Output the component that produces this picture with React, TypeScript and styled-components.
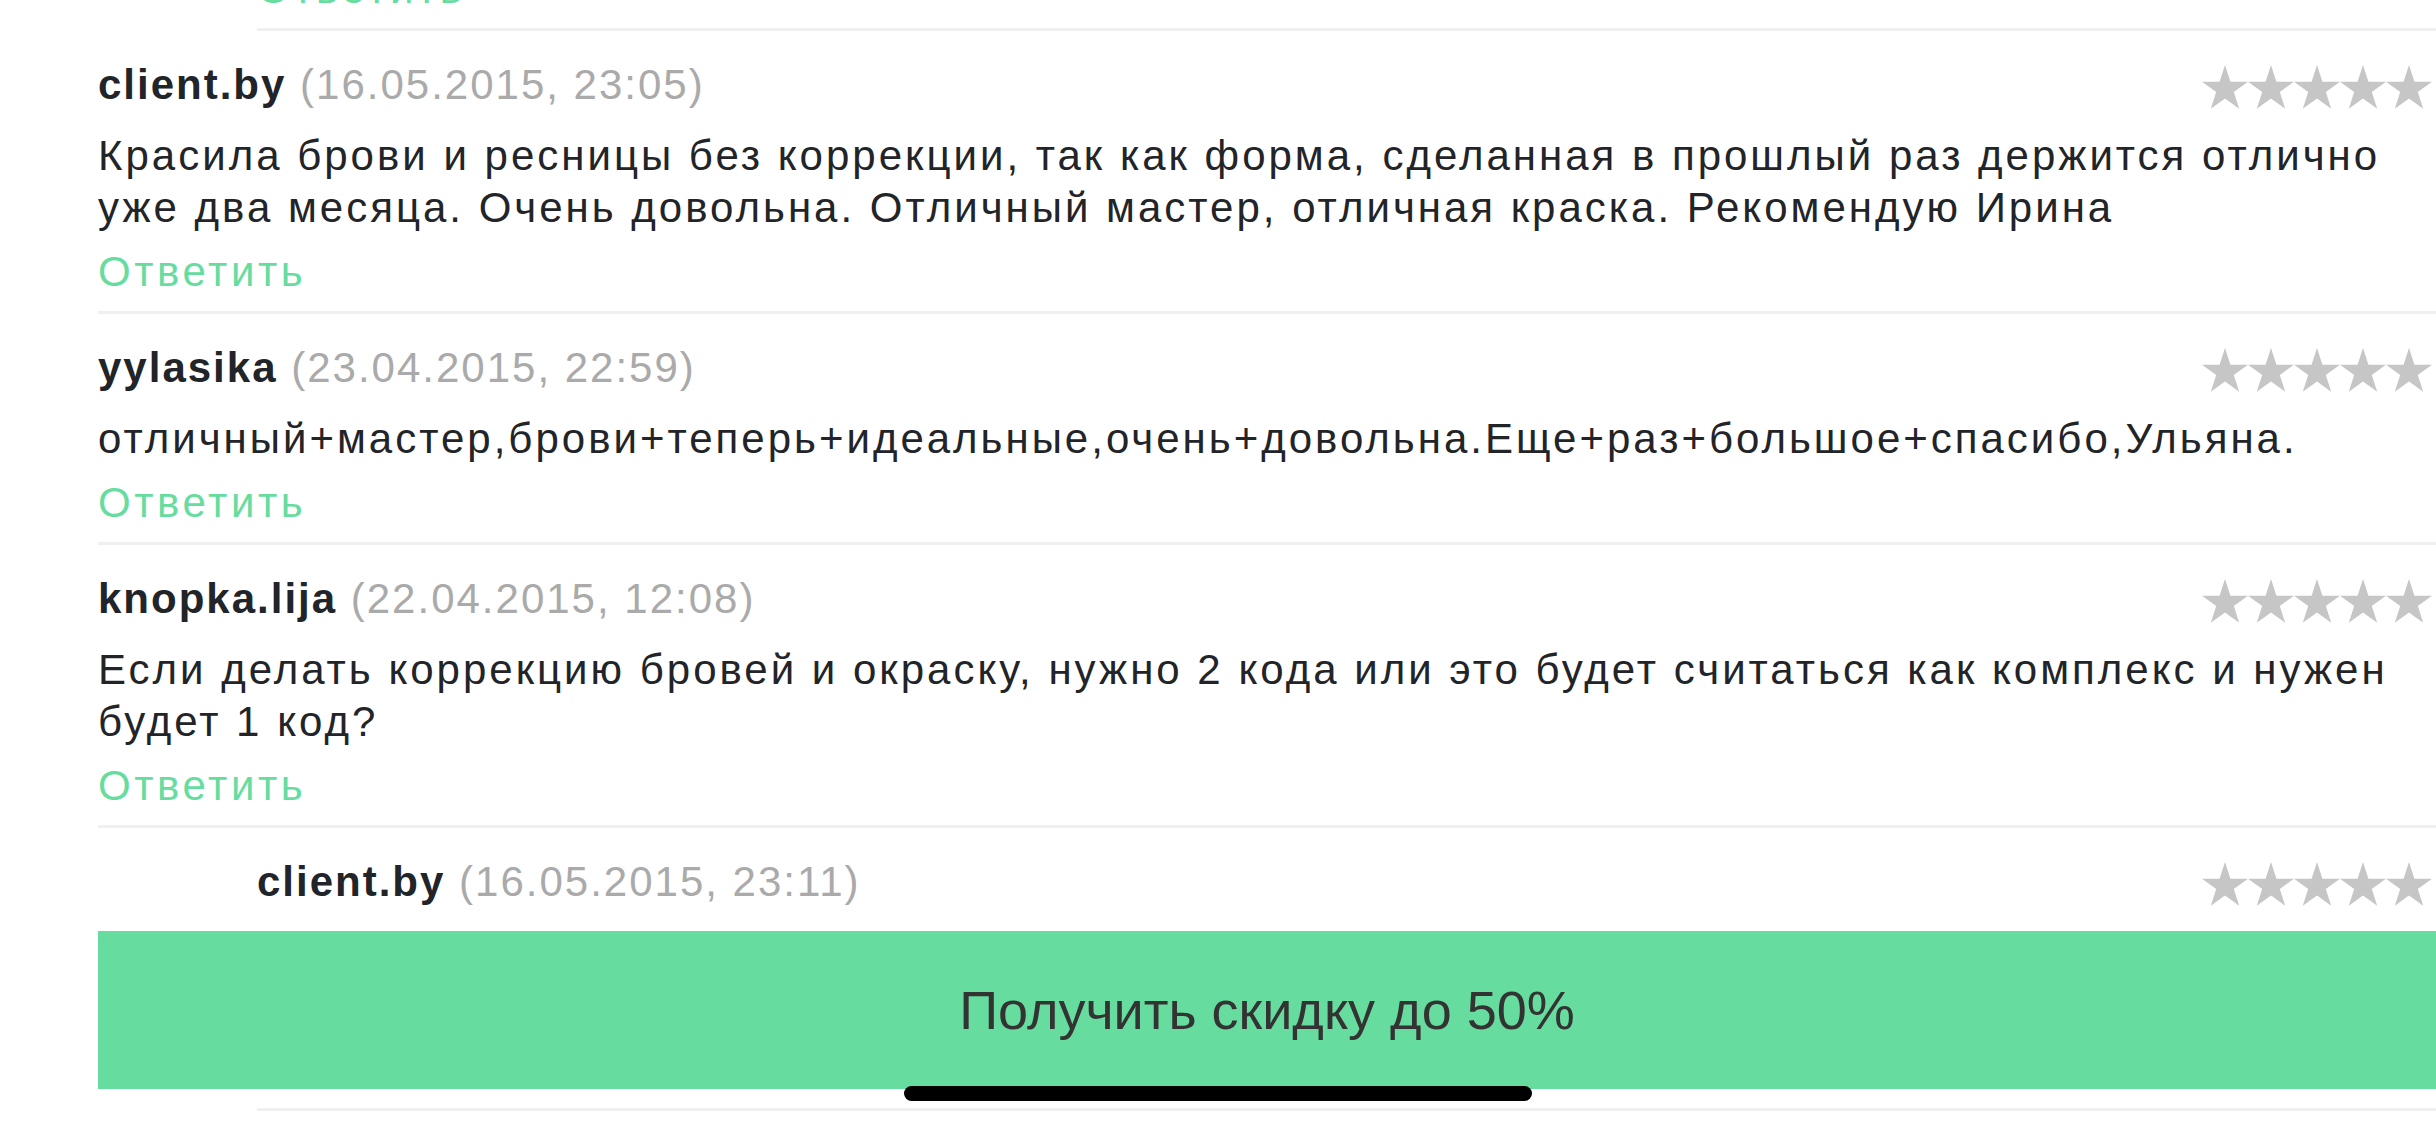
import styled, { createGlobalStyle } from 'styled-components';

const GlobalStyle = createGlobalStyle`
  html, body {
    margin: 0;
    padding: 0;
    background: #fff;
  }
  body {
    font-family: "Liberation Sans", Helvetica, Arial, sans-serif;
    color: #222428;
  }
`;

const Screen = styled.div`
  position: relative;
  width: 2436px;
  height: 1125px;
  overflow: hidden;
  background: #fff;
`;

const Feed = styled.div`
  display: flex;
  flex-direction: column;
  margin-top: -200px;
  padding-left: 98px;
`;

const Item = styled.div<{ $nested?: boolean }>`
  display: flex;
  flex-direction: column;
  margin-left: ${(p) => (p.$nested ? '159px' : '0')};
  padding: 28px 0 13px;
  border-bottom: 3px solid #f0f0f0;
`;

const Header = styled.div`
  display: flex;
  justify-content: space-between;
  align-items: flex-start;
  margin-bottom: 19px;
`;

const Author = styled.div`
  font-size: 42px;
  line-height: 52px;
  letter-spacing: 2px;
  white-space: nowrap;
`;

const Name = styled.span`
  font-weight: 700;
  color: #212428;
`;

const Date = styled.span`
  color: #aaaaaa;
`;

const Stars = styled.div`
  display: flex;
  margin-top: 6px;
  margin-right: 4px;
`;

const Text = styled.div`
  font-size: 42px;
  line-height: 52px;
  letter-spacing: 3px;
  color: #222428;
`;

const Reply = styled.a`
  margin-top: 12px;
  font-size: 42px;
  line-height: 52px;
  letter-spacing: 3.6px;
  color: #66dd9e;
  text-decoration: none;
  align-self: flex-start;
`;

const CtaButton = styled.button`
  position: absolute;
  left: 98px;
  right: 0;
  bottom: 36px;
  height: 158px;
  border: 0;
  padding: 0;
  background: #66dd9e;
  color: #333;
  font-family: "Liberation Sans", Helvetica, Arial, sans-serif;
  font-size: 54px;
  cursor: pointer;
`;

const HomeBar = styled.div`
  position: absolute;
  left: 50%;
  bottom: 24px;
  width: 628px;
  height: 15px;
  margin-left: -314px;
  border-radius: 8px;
  background: #000;
`;

function Star() {
  return (
    <svg width="46" height="44" viewBox="0 0 46 44" fill="#c6c6c6">
      <polygon points="23,0 28.43,16.71 46,16.71 31.79,27.04 37.21,43.74 23,33.42 8.79,43.74 14.21,27.04 0,16.71 17.57,16.71" />
    </svg>
  );
}

type Review = {
  name: string;
  date: string;
  text: string;
  nested?: boolean;
};

const reviews: Review[] = [
  {
    name: 'client.by',
    date: '17.05.2015, 10:12',
    text: 'Спасибо за отзыв! Ждём вас снова.',
    nested: true,
  },
  {
    name: 'client.by',
    date: '16.05.2015, 23:05',
    text: 'Красила брови и ресницы без коррекции, так как форма, сделанная в прошлый раз держится отлично уже два месяца. Очень довольна. Отличный мастер, отличная краска. Рекомендую Ирина',
  },
  {
    name: 'yylasika',
    date: '23.04.2015, 22:59',
    text: 'отличный+мастер,брови+теперь+идеальные,очень+довольна.Еще+раз+большое+спасибо,Ульяна.',
  },
  {
    name: 'knopka.lija',
    date: '22.04.2015, 12:08',
    text: 'Если делать коррекцию бровей и окраску, нужно 2 кода или это будет считаться как комплекс и нужен будет 1 код?',
  },
  {
    name: 'client.by',
    date: '16.05.2015, 23:11',
    text: 'Добрый день! Коррекция и окраска бровей — это две разные услуги, поэтому для каждой из них понадобится отдельный код. Ждём вас!',
    nested: true,
  },
];

export default function App() {
  return (
    <>
      <GlobalStyle />
      <Screen>
        <Feed>
          {reviews.map((r, i) => (
            <Item key={i} $nested={r.nested}>
              <Header>
                <Author>
                  <Name>{r.name}</Name> <Date>({r.date})</Date>
                </Author>
                <Stars>
                  {[0, 1, 2, 3, 4].map((s) => (
                    <Star key={s} />
                  ))}
                </Stars>
              </Header>
              <Text>{r.text}</Text>
              <Reply href="#">Ответить</Reply>
            </Item>
          ))}
        </Feed>
        <CtaButton>Получить скидку до 50%</CtaButton>
        <HomeBar />
      </Screen>
    </>
  );
}
